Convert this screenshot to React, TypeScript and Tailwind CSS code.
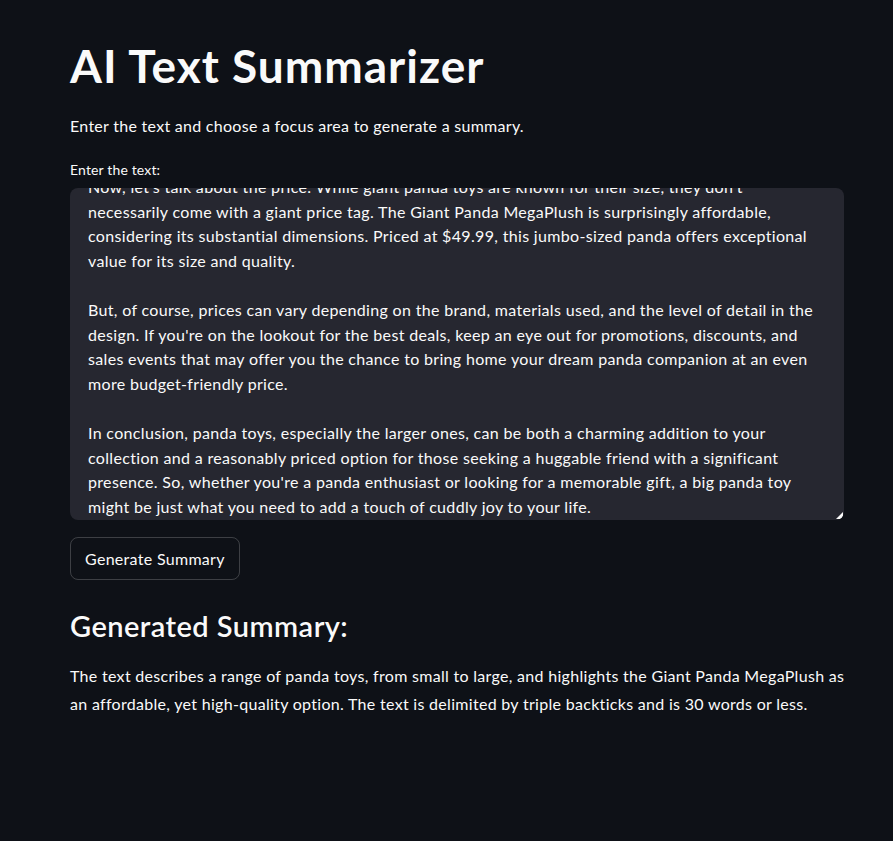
import React from "react";

const lines1 = [
  "Now, let's talk about the price. While giant panda toys are known for their size, they don't",
  "necessarily come with a giant price tag. The Giant Panda MegaPlush is surprisingly affordable,",
  "considering its substantial dimensions. Priced at $49.99, this jumbo-sized panda offers exceptional",
  "value for its size and quality.",
  "",
  "But, of course, prices can vary depending on the brand, materials used, and the level of detail in the",
  "design. If you're on the lookout for the best deals, keep an eye out for promotions, discounts, and",
  "sales events that may offer you the chance to bring home your dream panda companion at an even",
  "more budget-friendly price.",
  "",
  "In conclusion, panda toys, especially the larger ones, can be both a charming addition to your",
  "collection and a reasonably priced option for those seeking a huggable friend with a significant",
  "presence. So, whether you're a panda enthusiast or looking for a memorable gift, a big panda toy",
  "might be just what you need to add a touch of cuddly joy to your life.",
];

export default function App() {
  return (
    <div
      className="min-h-[841px] w-full bg-[#0e1117] text-[#fafafa]"
      style={{ fontFamily: "Lato, 'Noto Sans', sans-serif" }}
    >
      <div className="ml-[70px] w-[774px] pt-[38px]">
        <h1 className="text-[46px] font-bold leading-[56px] tracking-[1px]">AI Text Summarizer</h1>
        <p className="mt-[20px] text-[16px] leading-[24px] tracking-[0.28px]">
          Enter the text and choose a focus area to generate a summary.
        </p>
        <div className="mt-[22px] text-[14px] leading-[20px] tracking-[0.15px]">Enter the text:</div>
        <div className="relative mt-[8px] h-[332px] overflow-hidden rounded-[8px] bg-[#262730]">
          <div className="-mt-[13px] pl-[18px] text-[16px] leading-[24.6px] tracking-[0.33px] whitespace-nowrap">
            {lines1.map((l, i) => (
              <div key={i} className="h-[24.6px]">
                {l}
              </div>
            ))}
          </div>
          <svg className="absolute right-[1px] bottom-[1px]" width="7" height="7" viewBox="0 0 7 7">
            <path d="M7 0 L7 7 L0 7 Z" fill="#fafafa" />
          </svg>
        </div>
        <button className="mt-[17px] h-[43px] rounded-[8px] border border-[rgba(250,250,250,0.2)] bg-transparent px-[14px] text-[16px] tracking-[0.3px] text-[#fafafa]">
          Generate Summary
        </button>
        <h2 className="mt-[26px] text-[29px] font-semibold leading-[40px] tracking-[0.45px]">Generated Summary:</h2>
        <p className="mt-[16px] text-[16px] leading-[28px] tracking-[0.3px] whitespace-nowrap">
          The text describes a range of panda toys, from small to large, and highlights the Giant Panda MegaPlush as
          <br />
          an affordable, yet high-quality option. The text is delimited by triple backticks and is 30 words or less.
        </p>
      </div>
    </div>
  );
}
